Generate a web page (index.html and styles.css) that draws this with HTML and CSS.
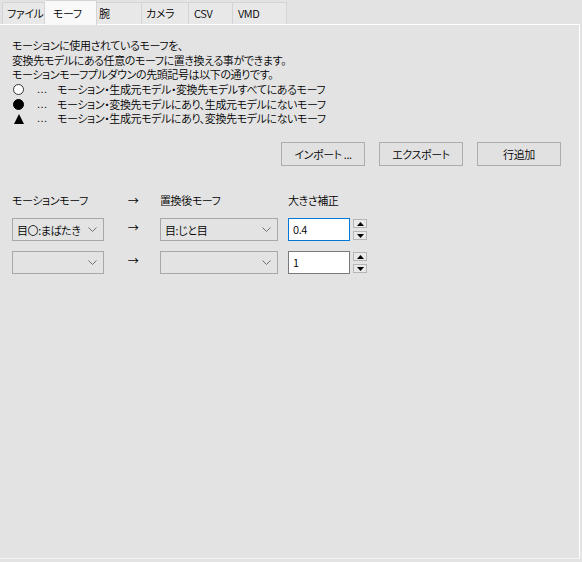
FILE: index.html
```html
<!DOCTYPE html>
<html lang="ja">
<head>
<meta charset="utf-8">
<link rel="stylesheet" href="styles.css">
</head>
<body>
<div class="window">
  <div class="tabs">
    <div class="tab t1">ファイル</div>
    <div class="tab t2 active">モーフ</div>
    <div class="tab t3">腕</div>
    <div class="tab t4">カメラ</div>
    <div class="tab t5">CSV</div>
    <div class="tab t6">VMD</div>
  </div>
  <div class="panel">
    <div class="desc">
      <div class="line">モーションに使用されているモーフを、</div>
      <div class="line">変換先モデルにある任意のモーフに置き換える事ができます。</div>
      <div class="line">モーションモーフプルダウンの先頭記号は以下の通りです。</div>
      <div class="line sym-line"><span class="sym"><span class="circle open"></span></span><span class="dots">...</span><span>モーション・生成元モデル・変換先モデルすべてにあるモーフ</span></div>
      <div class="line sym-line"><span class="sym"><span class="circle filled"></span></span><span class="dots">...</span><span>モーション・変換先モデルにあり、生成元モデルにないモーフ</span></div>
      <div class="line sym-line"><span class="sym"><span class="tri"></span></span><span class="dots">...</span><span>モーション・生成元モデルにあり、変換先モデルにないモーフ</span></div>
    </div>
    <div class="actions">
      <button class="btn">インポート ...</button>
      <button class="btn">エクスポート</button>
      <button class="btn">行追加</button>
    </div>
    <div class="grid">
      <div class="hdr">モーションモーフ</div>
      <div class="hdr arrow">→</div>
      <div class="hdr">置換後モーフ</div>
      <div class="hdr size">大きさ補正</div>

      <div class="combo"><span class="val">目〇:まばたき</span><svg class="chev" width="9" height="5" viewBox="0 0 9 5"><path d="M0.5 0.5 L4.5 4.5 L8.5 0.5" fill="none" stroke="#707070" stroke-width="1"/></svg></div>
      <div class="arrow row-arrow">→</div>
      <div class="combo"><span class="val">目:じと目</span><svg class="chev" width="9" height="5" viewBox="0 0 9 5"><path d="M0.5 0.5 L4.5 4.5 L8.5 0.5" fill="none" stroke="#707070" stroke-width="1"/></svg></div>
      <div class="spin">
        <div class="input focus">0.4</div>
        <div class="spinbtns">
          <div class="sb"><svg width="7" height="4" viewBox="0 0 7 4"><path d="M0 4 L3.5 0 L7 4 Z" fill="#000"/></svg></div>
          <div class="sb"><svg width="7" height="4" viewBox="0 0 7 4"><path d="M0 0 L3.5 4 L7 0 Z" fill="#000"/></svg></div>
        </div>
      </div>

      <div class="combo"><span class="val"></span><svg class="chev" width="9" height="5" viewBox="0 0 9 5"><path d="M0.5 0.5 L4.5 4.5 L8.5 0.5" fill="none" stroke="#707070" stroke-width="1"/></svg></div>
      <div class="arrow row-arrow">→</div>
      <div class="combo"><span class="val"></span><svg class="chev" width="9" height="5" viewBox="0 0 9 5"><path d="M0.5 0.5 L4.5 4.5 L8.5 0.5" fill="none" stroke="#707070" stroke-width="1"/></svg></div>
      <div class="spin">
        <div class="input">1</div>
        <div class="spinbtns">
          <div class="sb"><svg width="7" height="4" viewBox="0 0 7 4"><path d="M0 4 L3.5 0 L7 4 Z" fill="#000"/></svg></div>
          <div class="sb"><svg width="7" height="4" viewBox="0 0 7 4"><path d="M0 0 L3.5 4 L7 0 Z" fill="#000"/></svg></div>
        </div>
      </div>
    </div>
  </div>
</div>
</body>
</html>
```

FILE: styles.css
```css
* { box-sizing: border-box; }
html, body {
  margin: 0;
  padding: 0;
  background: #e3e3e3;
}
body {
  width: 582px;
  height: 562px;
  overflow: hidden;
  font-family: "Noto Sans CJK JP", "Noto Sans", sans-serif;
  font-size: 11px;
  font-weight: 350;
  letter-spacing: -0.4px;
  color: #000;
  font-feature-settings: "palt";
}
.window {
  width: 582px;
  height: 562px;
  padding-bottom: 3px;
  display: flex;
  flex-direction: column;
}
.tabs {
  display: flex;
  height: 24px;
  padding-left: 2px;
  align-items: flex-end;
}
.tab {
  height: 22px;
  line-height: 21px;
  background: #e8e8e8;
  border: 1px solid #d4d4d4;
  border-bottom: none;
  border-left: none;
  padding-left: 6px;
  white-space: nowrap;
}
.t1 { width: 43px; border-left: 1px solid #d4d4d4; padding-left: 4px; }
.t2 { width: 52px; }
.t3 { width: 45px; padding-left: 2px; }
.t4 { width: 47px; padding-left: 4px; }
.t5 { width: 44px; padding-left: 5px; }
.t6 { width: 54px; padding-left: 5px; }
.tab.active {
  height: 25px;
  margin-bottom: -1px;
  background: #f9f9f9;
  line-height: 24px;
  padding-left: 8px;
  border-color: #d4d4d4;
  position: relative;
  z-index: 1;
}
.panel {
  width: 580px;
  flex: 1;
  border-top: 1px solid #ffffff;
  border-right: 1px solid #ffffff;
  border-bottom: 1px solid #f4f4f4;
  padding: 0 18px 0 12px;
}
.desc {
  margin-top: 13px;
  line-height: 14.7px;
}
.line { white-space: nowrap; height: 14.7px; }
.sym-line { display: flex; align-items: center; }
.sym {
  width: 25px;
  display: flex;
  align-items: center;
  padding-left: 1px;
}
.circle {
  width: 11px;
  height: 11px;
  border-radius: 50%;
  border: 1px solid #000;
}
.circle.open { background: #fff; border-color: #333; }
.circle.filled { background: #000; }
.tri {
  width: 0;
  height: 0;
  margin-left: 1px;
  border-left: 5.5px solid transparent;
  border-right: 5.5px solid transparent;
  border-bottom: 10px solid #000;
}
.dots {
  width: 20px;
  font-family: "Liberation Sans", sans-serif;
  font-size: 11px;
  letter-spacing: 0.5px;
}
.actions {
  display: flex;
  justify-content: flex-end;
  gap: 14px;
  margin-top: 16px;
}
.btn {
  width: 84px;
  height: 24px;
  background: #e1e1e1;
  border: 1px solid #adadad;
  font: inherit;
  letter-spacing: inherit;
  font-feature-settings: "palt";
  color: #000;
  padding: 0;
  margin: 0;
}
.grid {
  display: grid;
  grid-template-columns: 92px 56px 118px auto;
  grid-template-rows: 16px 23px 23px;
  row-gap: 10px;
  margin-top: 26px;
  align-items: center;
}
.hdr { line-height: 16px; white-space: nowrap; }
.size { padding-left: 10px; }
.arrow {
  text-align: center;
  padding-left: 2px;
}
.row-arrow { align-self: start; line-height: 18px; }
.combo {
  height: 23px;
  border: 1px solid #a8a8a8;
  background: #e3e3e3;
  display: flex;
  align-items: center;
  padding-left: 4px;
  padding-right: 6px;
}
.combo .val { flex: 1; white-space: nowrap; }
.chev { flex: none; }
.spin {
  display: flex;
  align-items: flex-start;
  padding-left: 10px;
  height: 23px;
}
.input {
  width: 62px;
  height: 23px;
  background: #fff;
  border: 1px solid #7a7a7a;
  line-height: 21px;
  padding-left: 4px;
}
.input.focus { border-color: #0078d7; }
.spinbtns {
  margin-left: 3px;
  padding-top: 1px;
  display: flex;
  flex-direction: column;
  gap: 3px;
}
.sb {
  width: 14px;
  height: 9px;
  background: #e9e9e9;
  border: 1px solid #b5b5b5;
  display: flex;
  align-items: center;
  justify-content: center;
}
.sb svg { display: block; }
```
